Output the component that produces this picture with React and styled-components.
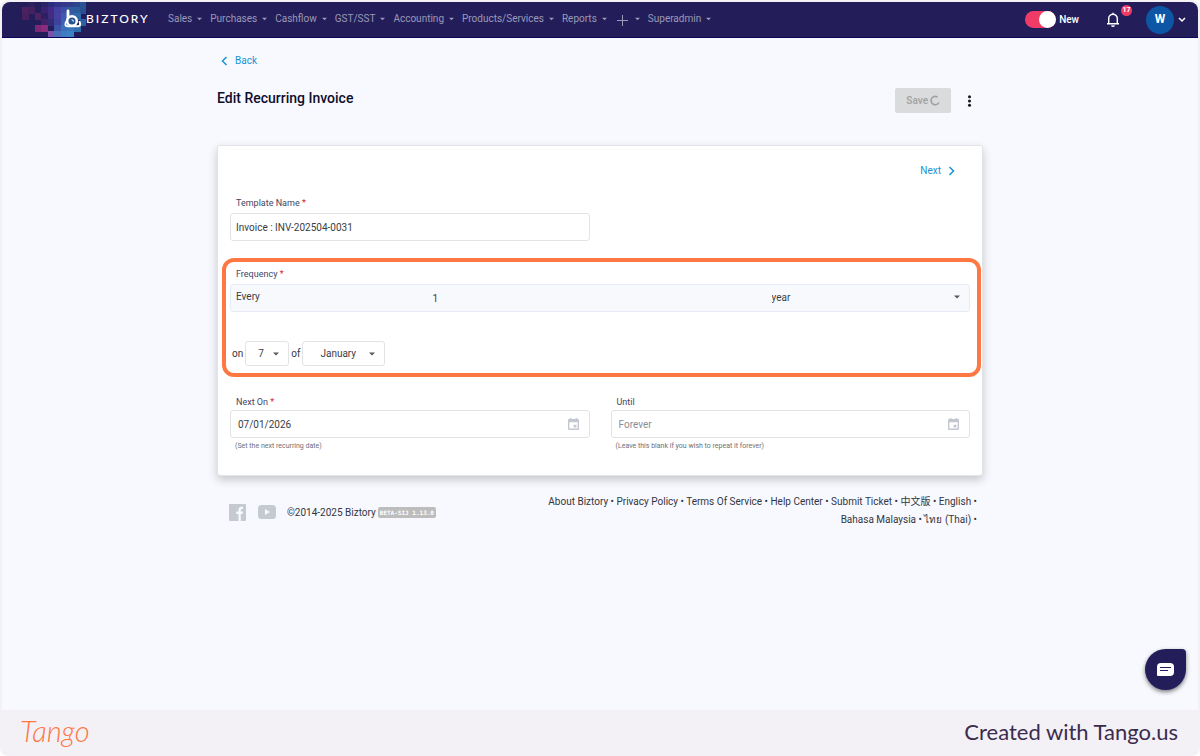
import React from "react";
import styled, { createGlobalStyle } from "styled-components";

const Global = createGlobalStyle`
  * { box-sizing: border-box; }
  body { margin: 0; background: #fff; font-family: Roboto, "Noto Sans CJK SC", sans-serif; font-size: 10px; color: #33363f; }
  button, input, select { font: inherit; color: inherit; margin: 0; }
  a { color: inherit; text-decoration: none; }
`;

const Frame = styled.div`
  min-height: 100vh;
  display: flex;
  flex-direction: column;
  padding: 2px 2px 0;
  background: #f3f1f6;
  border-radius: 8px;
`;

const Screen = styled.div`
  position: relative;
  flex: 1;
  background: #f8f9fe;
  border-radius: 8px 8px 0 0;
  overflow: hidden;
`;

const NavBar = styled.header`
  display: flex;
  align-items: stretch;
  height: 36px;
  background: #231e5a;
  border-bottom: 1px solid #0a0554;
`;

const Brand = styled.a`
  display: flex;
  color: #fff;
  width: 166px;
`;

const BrandName = styled.span`
  font: 500 12px/33px Lato, sans-serif;
  letter-spacing: 2px;
`;

const Menu = styled.nav`
  display: flex;
  flex: 1;
  align-items: flex-start;
  gap: 8px;
`;

const MenuButton = styled.button`
  display: flex;
  align-items: center;
  gap: 5px;
  height: 33px;
  padding: 0;
  border: 0;
  background: none;
  color: #9c99b8;
`;

const NavTools = styled.div`
  display: flex;
  align-items: center;
  height: 35px;
  padding-right: 12px;
  color: #fff;
`;

const SwitchLabel = styled.label`
  display: flex;
  align-items: center;
  gap: 3px;
  font-weight: 500;
  margin-right: 27px;
`;

const Switch = styled.input`
  appearance: none;
  width: 31px;
  height: 17px;
  border-radius: 9px;
  background: #ef3c66;
  display: flex;
  justify-content: flex-end;
  &::after {
    content: "";
    width: 17px;
    height: 17px;
    border-radius: 50%;
    background: #fff;
  }
`;

const BellButton = styled.button`
  position: relative;
  display: flex;
  padding: 0;
  border: 0;
  background: none;
  color: #fff;
  margin-right: 26px;
`;

const Badge = styled.span`
  position: absolute;
  left: 15px;
  top: -7px;
  width: 11px;
  height: 11px;
  border-radius: 50%;
  background: #ef3c66;
  font: 700 7px/11px Roboto, sans-serif;
  text-align: center;
`;

const Account = styled.button`
  display: flex;
  align-items: center;
  gap: 4px;
  padding: 0;
  border: 0;
  background: none;
  color: #fff;
`;

const Avatar = styled.span`
  width: 28px;
  height: 28px;
  border-radius: 50%;
  background: #0d56a6;
  font: 700 12px/26px Roboto, sans-serif;
`;

const Content = styled.main`
  max-width: 766px;
  margin: 0 auto;
`;

const StepLink = styled.a`
  display: inline-flex;
  align-items: center;
  gap: 7px;
  color: #1593d4;
  line-height: 14px;
`;

const BackRow = styled.div`
  display: flex;
  padding: 16px 4px 0;
`;

const TitleRow = styled.div`
  display: flex;
  align-items: flex-start;
  justify-content: space-between;
  padding: 20px 11px 32px 0;
`;

const Title = styled.h1`
  margin: 0;
  font-size: 14px;
  font-weight: 500;
  line-height: 20px;
  color: #0d0e2c;
`;

const Actions = styled.div`
  display: flex;
  align-items: center;
  gap: 16px;
`;

const SaveButton = styled.button`
  display: flex;
  align-items: center;
  gap: 2px;
  height: 25px;
  padding: 0 11px;
  border: 0;
  border-radius: 2px;
  background: #dadbdc;
  color: #a0a1a3;
  font-weight: 500;
`;

const IconButton = styled.button`
  display: flex;
  padding: 0;
  border: 0;
  background: none;
  color: #14151a;
`;

const Card = styled.form`
  padding: 18px 12px 20px;
  background: #fff;
  border: 1px solid #e3e4e8;
  border-radius: 3px;
  box-shadow: 0 4px 10px rgba(0, 0, 0, 0.2);
`;

const NextRow = styled.div`
  display: flex;
  justify-content: flex-end;
  padding: 0 15px 17px 0;
`;

const Columns = styled.div`
  display: grid;
  grid-template-columns: 1fr 1fr;
  column-gap: 21px;
`;

const Field = styled.div`
  display: flex;
  flex-direction: column;
  gap: ${(p) => p.$gap || 0}px;
`;

const Label = styled.label`
  padding-left: 6px;
  font-size: 9px;
  line-height: 16px;
  color: #3f4565;
`;

const Star = styled.span`
  color: #d8232a;
`;

const InputBox = styled.div`
  display: flex;
  align-items: center;
  height: 28px;
  padding-right: 10px;
  border: 1px solid #e2e3e7;
  border-radius: 3px;
  background: #fff;
  color: #c3c8d0;
`;

const TextInput = styled.input`
  flex: 1;
  min-width: 0;
  height: 26px;
  padding: 0 0 0 ${(p) => p.$inset}px;
  border: 0;
  outline: 0;
  background: none;
  color: #3b3d43;
  &::placeholder { color: #8b8d93; opacity: 1; }
`;

const Hint = styled.small`
  padding-left: 5px;
  font-size: 7px;
  line-height: 17px;
  color: #6d7078;
`;

const Highlight = styled.section`
  margin: 17px -11px 17px -8px;
  padding: 4px 7px 7px 4px;
  border: 4px solid #ff7742;
  border-radius: 12px;
`;

const FrequencyBar = styled.div`
  display: grid;
  grid-template-columns: 202fr 340fr 198fr;
  height: 28px;
  margin: 2px 0 29px;
  border: 1px solid #e6ebf5;
  border-radius: 3px;
  background: #f8f9fd;
  color: #3b3d43;
`;

const Every = styled.span`
  padding-left: 5px;
  line-height: 24px;
`;

const SelectWrap = styled.span`
  display: inline-flex;
  align-items: center;
  height: ${(p) => (p.$boxed ? 25 : 24)}px;
  width: ${(p) => p.$width};
  padding: 0 9px 0 ${(p) => p.$inset}px;
  border: ${(p) => (p.$boxed ? "1px solid #e2e3e7" : "0")};
  border-radius: 3px;
  color: #55575c;
`;

const Select = styled.select`
  appearance: none;
  flex: 1;
  min-width: 0;
  padding: 0;
  border: 0;
  outline: 0;
  background: none;
  color: #3b3d43;
`;

const OnRow = styled.div`
  display: flex;
  align-items: center;
  gap: 2px;
  padding-left: 2px;
`;

const PageFooter = styled.footer`
  display: flex;
  align-items: flex-start;
  justify-content: space-between;
  padding: 17px 6px 0 12px;
`;

const Social = styled.div`
  display: flex;
  align-items: center;
  height: 38px;
  color: #c5cad1;
`;

const SocialLink = styled.a`
  display: flex;
  margin-right: ${(p) => p.$gap}px;
`;

const Copyright = styled.span`
  color: #33363f;
`;

const Version = styled.span`
  height: 11px;
  margin-left: 2px;
  padding: 0 2px;
  border-radius: 2px;
  background: #bdbdbd;
  color: #fff;
  font: 700 6px/11px "DejaVu Sans Mono", monospace;
`;

const Links = styled.div`
  max-width: 430px;
  text-align: right;
  line-height: 18px;
`;

const ChatButton = styled.button`
  position: absolute;
  right: 12px;
  bottom: 20px;
  display: flex;
  align-items: center;
  justify-content: center;
  width: 41px;
  height: 41px;
  padding: 0;
  border: 0;
  border-radius: 50% 4px 50% 50%;
  background: #231e5a;
  box-shadow: 0 2px 4px rgba(0, 0, 0, 0.5);
`;

const Credit = styled.div`
  display: flex;
  align-items: flex-start;
  justify-content: space-between;
  height: 46px;
  padding: 0 20px 0 18px;
  color: #3b2b4d;
  font: 400 22px/44px Lato, sans-serif;
`;

const TangoName = styled.span`
  color: #ff7742;
  font: italic 300 29px/42px Lato, sans-serif;
`;

const Caret = ({ w = 6 }) => (
  <svg width={w} height="4" viewBox="0 0 6 4" aria-hidden="true">
    <path d="M0 .5h6L3 3.5z" fill="currentColor" />
  </svg>
);

const Chevron = ({ d, w = 7, h = 10 }) => (
  <svg width={w} height={h} viewBox={`0 0 ${w} ${h}`} fill="none" stroke="currentColor" strokeWidth="1.5" aria-hidden="true">
    <path d={d} />
  </svg>
);

const Calendar = () => (
  <svg width="11" height="12" viewBox="0 0 11 12" aria-hidden="true">
    <path fill="currentColor" fillRule="evenodd" d="M1.800 0h1.600v1h4.200V0h1.600v1H10q1 0 1 1v9q0 1-1 1H1q-1 0-1-1V2q0-1 1-1h.8zM1.400 4.200v6.400h8.200V4.200zM5.600 6.700h2.800v2.800H5.600z" />
  </svg>
);

const blocks = [
  [26, 0, "#2c2060"], [39, 0, "#2c2469"], [46, 0, "#2b2d7a"], [52, 0, "#30338a"], [59, 0, "#37368c"], [65, 0, "#303d88"], [72, 0, "#2b468c"], [78, 0, "#2b5092"],
  [20, 6, "#4e2260"], [26, 6, "#43215f"], [39, 6, "#3a2370"], [46, 6, "#432c88"], [52, 6, "#4440a2"], [59, 6, "#3b4ea6"], [65, 6, "#315a9e"], [72, 6, "#2c5b9b"], [78, 6, "#285090"],
  [20, 12, "#46205f"], [33, 12, "#4c2363"], [39, 12, "#2f2063"], [46, 12, "#422c7e"], [52, 12, "#4541a3"], [59, 12, "#3f58b0"], [65, 12, "#3a5fae"], [72, 12, "#2f6aa8"],
  [39, 18, "#40236a"], [46, 18, "#332b76"], [52, 18, "#3f429c"], [59, 18, "#3f60b4"], [65, 18, "#3b69b4"], [78, 18, "#2c62a0"],
  [33, 24, "#7d2877"], [39, 24, "#8a2c7d"], [52, 24, "#3b54a8"], [59, 24, "#3b6fb8"], [65, 24, "#3874b8"], [72, 24, "#2f6dae"],
  [46, 30, "#7c51a8"], [52, 30, "#4a6cb8"], [59, 30, "#3d7cc2"], [65, 30, "#3a83c4"],
];

const BrandMark = () => (
  <svg width="84" height="35" viewBox="0 0 84 35" aria-hidden="true">
    {blocks.map(([x, y, c]) => <rect key={`${x}-${y}`} x={x} y={y - 1} width="7" height="7" fill={c} />)}
    <g fill="none" stroke="#fff" strokeLinecap="round">
      <path d="M66 9v11" strokeWidth="2.800" />
      <circle cx="70" cy="19" r="4.800" fill="#27538f" strokeWidth="2.500" />
      <path d="M64.300 19.500q-2.500 4.500 1.500 4.800h10.500q3-1 1.200-4.500" strokeWidth="2" />
      <path d="M70 17.800q1.800 0 1.400 1.500" strokeWidth="1" />
    </g>
  </svg>
);

const menus = ["Sales", "Purchases", "Cashflow", "GST/SST", "Accounting", "Products/Services", "Reports", "+", "Superadmin"];
const links = ["About Biztory", "Privacy Policy", "Terms Of Service", "Help Center", "Submit Ticket", "中文版", "English", "Bahasa Malaysia", "ไทย (Thai)"];

export default function App() {
  return (
    <Frame>
      <Global />
      <Screen>
        <NavBar>
          <Brand href="#" aria-label="Biztory">
            <BrandMark />
            <BrandName>BIZTORY</BrandName>
          </Brand>
          <Menu>
            {menus.map((m) => (
              <MenuButton key={m} type="button" aria-label={m === "+" ? "Create" : undefined}>
                {m === "+" ? (
                  <svg width="15" height="14" viewBox="0 0 15 14" stroke="currentColor" aria-hidden="true">
                    <path d="M2 8.500h11M7.500 3v11" />
                  </svg>
                ) : m}
                <Caret w={5} />
              </MenuButton>
            ))}
          </Menu>
          <NavTools>
            <SwitchLabel>
              <Switch type="checkbox" role="switch" defaultChecked />
              New
            </SwitchLabel>
            <BellButton type="button" aria-label="Notifications">
              <svg width="14" height="16" viewBox="0 0 14 16" fill="none" stroke="currentColor" strokeWidth="1.400" aria-hidden="true">
                <path d="M1 11.800h12M2.700 11.500V6.500a4.300 4.300 0 0 1 8.600 0v5M5.500 13.500q1.500 1.500 3 0M7 2V.8" />
              </svg>
              <Badge>17</Badge>
            </BellButton>
            <Account type="button">
              <Avatar>W</Avatar>
              <Chevron d="M1 1l3 3 3-3" w={8} h={6} />
            </Account>
          </NavTools>
        </NavBar>

        <Content>
          <BackRow>
            <StepLink href="#"><Chevron d="M5.500 1L1.500 5l4 4" />Back</StepLink>
          </BackRow>
          <TitleRow>
            <Title>Edit Recurring Invoice</Title>
            <Actions>
              <SaveButton type="button" disabled>
                Save
                <svg width="10" height="11" viewBox="0 0 10 11" fill="none" stroke="currentColor" strokeWidth="1.600" aria-hidden="true">
                  <path d="M7.500 2A4.200 4.200 0 1 0 9 7.500" />
                </svg>
              </SaveButton>
              <IconButton type="button" aria-label="More">
                <svg width="5" height="12" viewBox="0 0 5 12" fill="currentColor" aria-hidden="true">
                  <circle cx="2.500" cy="1.800" r="1.500" /><circle cx="2.500" cy="6" r="1.500" /><circle cx="2.500" cy="10.200" r="1.500" />
                </svg>
              </IconButton>
            </Actions>
          </TitleRow>

          <Card>
            <NextRow>
              <StepLink href="#">Next<Chevron d="M1.500 1l4 4-4 4" /></StepLink>
            </NextRow>
            <Columns>
              <Field $gap={2}>
                <Label htmlFor="template">Template Name <Star>*</Star></Label>
                <InputBox>
                  <TextInput id="template" $inset={5} defaultValue="Invoice : INV-202504-0031" />
                </InputBox>
              </Field>
            </Columns>
            <Highlight>
              <Label htmlFor="interval">Frequency <Star>*</Star></Label>
              <FrequencyBar>
                <Every>Every</Every>
                <TextInput id="interval" $inset={0} defaultValue="1" />
                <SelectWrap $inset={0} $width="100%">
                  <Select aria-label="Unit"><option>year</option></Select>
                  <Caret />
                </SelectWrap>
              </FrequencyBar>
              <OnRow>
                on
                <SelectWrap $boxed $inset={12} $width="44px">
                  <Select aria-label="Day"><option>7</option></Select>
                  <Caret />
                </SelectWrap>
                of
                <SelectWrap $boxed $inset={17} $width="83px">
                  <Select aria-label="Month"><option>January</option></Select>
                  <Caret />
                </SelectWrap>
              </OnRow>
            </Highlight>
            <Columns>
              <Field>
                <Label htmlFor="next">Next On <Star>*</Star></Label>
                <InputBox>
                  <TextInput id="next" $inset={7} defaultValue="07/01/2026" />
                  <Calendar />
                </InputBox>
                <Hint>(Set the next recurring date)</Hint>
              </Field>
              <Field>
                <Label htmlFor="until">Until</Label>
                <InputBox>
                  <TextInput id="until" $inset={7} placeholder="Forever" />
                  <Calendar />
                </InputBox>
                <Hint>(Leave this blank if you wish to repeat it forever)</Hint>
              </Field>
            </Columns>
          </Card>

          <PageFooter>
            <Social>
              <SocialLink href="#" aria-label="Facebook" $gap={12}>
                <svg width="17" height="17" viewBox="0 0 17 17" aria-hidden="true">
                  <rect width="17" height="17" rx="1" fill="currentColor" />
                  <path d="M9.500 17V10H7.200V7.500h2.300V5.800Q9.500 2.800 12.500 2.800H14v2.300h-1.300q-.9 0-.9.9v1.500H14L13.700 10h-1.900v7z" fill="#f8f9fe" />
                </svg>
              </SocialLink>
              <SocialLink href="#" aria-label="YouTube" $gap={11}>
                <svg width="18" height="14" viewBox="0 0 18 14" aria-hidden="true">
                  <rect width="18" height="14" rx="3.500" fill="currentColor" />
                  <path d="M7 4l5 3-5 3z" fill="#f8f9fe" />
                </svg>
              </SocialLink>
              <Copyright>©2014-2025 Biztory</Copyright>
              <Version>BETA-SIJ 1.13.0</Version>
            </Social>
            <Links>
              {links.map((l) => <React.Fragment key={l}><a href="#">{l}</a> • </React.Fragment>)}
            </Links>
          </PageFooter>
        </Content>

        <ChatButton type="button" aria-label="Chat">
          <svg width="17" height="13" viewBox="0 0 17 13" aria-hidden="true">
            <path d="M4 0h9q4 0 4 4v5q0 4-4 4H1q-1 0-1-1V4q0-4 4-4z" fill="#fff" />
            <path d="M3 4.500h11M3 7.500h8" stroke="#231e5a" />
          </svg>
        </ChatButton>
      </Screen>
      <Credit>
        <TangoName>Tango</TangoName>
        <span>Created with Tango.us</span>
      </Credit>
    </Frame>
  );
}
